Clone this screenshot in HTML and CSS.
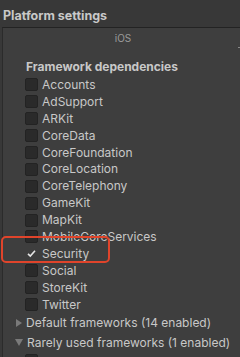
FILE: index.html
```html
<!DOCTYPE html>
<html lang="en">
<head>
    <meta charset="UTF-8">
    <title>Platform settings</title>
    <link rel="stylesheet" href="styles.css">
</head>
<body>
    <div class="title">Platform settings</div>
    <div class="panel">
        <div class="tab">iOS</div>
        <div class="section">Framework dependencies</div>
        <ul class="list">
            <li><span class="box"></span>Accounts</li>
            <li><span class="box"></span>AdSupport</li>
            <li><span class="box"></span>ARKit</li>
            <li><span class="box"></span>CoreData</li>
            <li><span class="box"></span>CoreFoundation</li>
            <li><span class="box"></span>CoreLocation</li>
            <li><span class="box"></span>CoreTelephony</li>
            <li><span class="box"></span>GameKit</li>
            <li><span class="box"></span>MapKit</li>
            <li><span class="box"></span>MobileCoreServices</li>
            <li><span class="box checked"><svg width="13" height="13" viewBox="0 0 13 13"><polyline points="3,6.8 5.3,9 10,3.8" fill="none" stroke="#e6e6e6" stroke-width="1.6"/></svg></span>Security</li>
            <li><span class="box"></span>Social</li>
            <li><span class="box"></span>StoreKit</li>
            <li><span class="box"></span>Twitter</li>
        </ul>
        <div class="fold"><span class="arrow right"></span>Default frameworks (14 enabled)</div>
        <div class="fold"><span class="arrow down"></span>Rarely used frameworks (1 enabled)</div>
        <ul class="list">
            <li><span class="box"></span></li>
        </ul>
        <div class="mark"></div>
    </div>
    <div class="highlight"></div>
</body>
</html>
```

FILE: styles.css
```css
* {
    margin: 0;
    padding: 0;
}
body {
    background: #383838;
    color: #c8c8c8;
    font: 12px/1 Inter, "Noto Sans", sans-serif;
    overflow: hidden;
    position: relative;
    height: 357px;
}
.title {
    height: 27px;
    padding-left: 3px;
    font-weight: 700;
    font-size: 12.5px;
    line-height: 32px;
    box-sizing: border-box;
}
.panel {
    position: relative;
    margin-left: 2px;
    background: #3e3e3e;
    border-top: 1px solid #232323;
    border-left: 1px solid #2b2b2b;
    height: 329px;
    overflow: hidden;
}
.tab {
    height: 20px;
    line-height: 20px;
    text-align: center;
    font-size: 10px;
    color: #9a9a9a;
    padding-left: 3px;
}
.section {
    margin-top: 10px;
    height: 18.5px;
    line-height: 18px;
    padding-left: 23px;
    font-weight: 700;
}
.list {
    list-style: none;
    padding-left: 22px;
}
.list li {
    display: flex;
    align-items: center;
    height: 16.9px;
    gap: 4px;
}
.box {
    width: 13px;
    height: 13px;
    box-sizing: border-box;
    background: #2a2a2a;
    border: 1px solid #232323;
    border-radius: 2px;
}
.box.checked {
    background: none;
    border: 0;
}
.box svg {
    display: block;
}
.fold {
    display: flex;
    align-items: center;
    height: 19.7px;
    padding-left: 12px;
    gap: 3px;
}
.arrow.right {
    width: 0;
    height: 0;
    border-top: 4.5px solid transparent;
    border-bottom: 4.5px solid transparent;
    border-left: 6px solid #7a7a7a;
    margin-left: 1px;
    margin-right: 1px;
}
.arrow.down {
    width: 0;
    height: 0;
    border-left: 4px solid transparent;
    border-right: 4px solid transparent;
    border-top: 7px solid #7a7a7a;
    margin-right: 1px;
}
.mark {
    position: absolute;
    right: 0;
    top: 19px;
    width: 2px;
    height: 1px;
    background: #8a8a8a;
}
.highlight {
    position: absolute;
    left: 1px;
    top: 235.5px;
    width: 109px;
    height: 27px;
    box-sizing: border-box;
    border: 2.5px solid #e0442b;
    border-radius: 5px;
}
```
